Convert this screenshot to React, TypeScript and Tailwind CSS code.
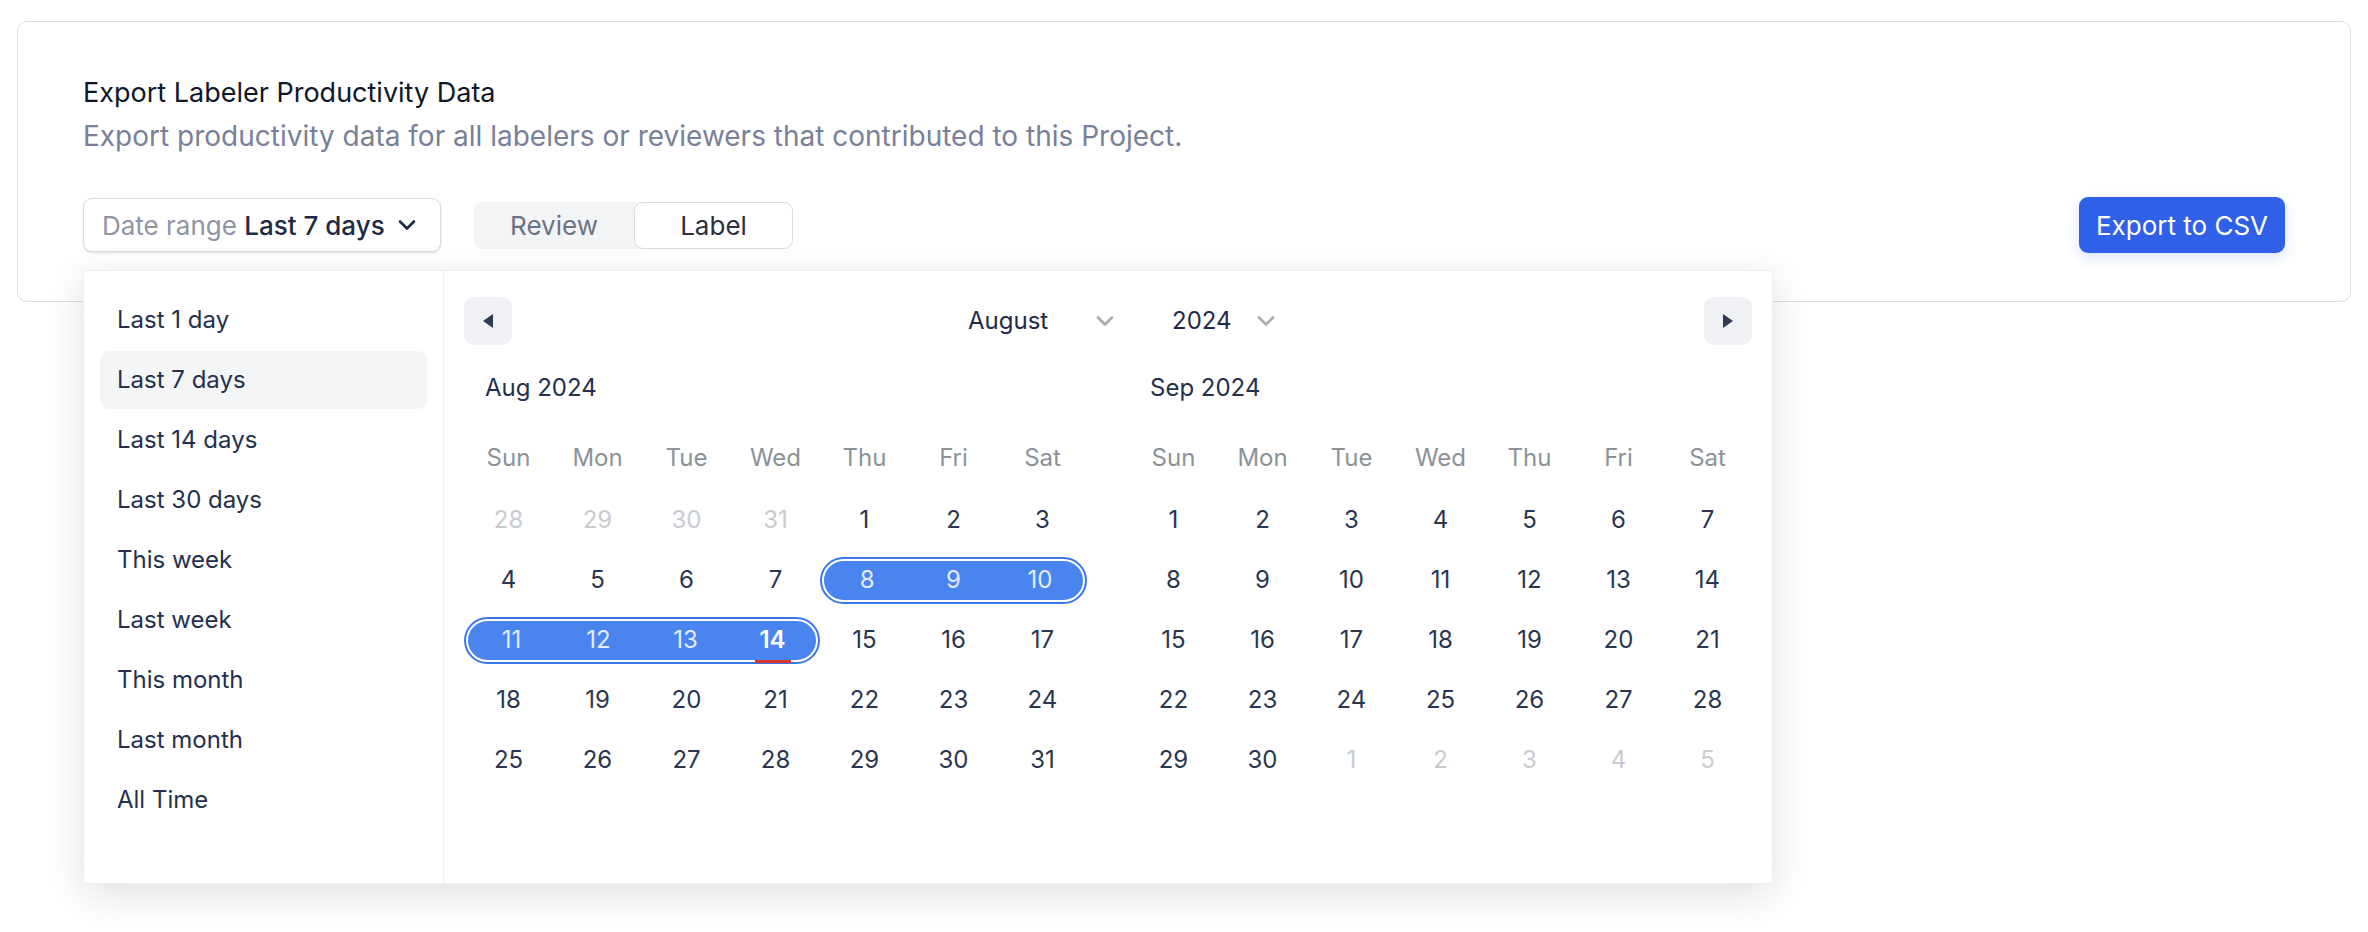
import React from "react";

type Day = { d: number; muted?: boolean };
type Week = { days: Day[]; pill?: [number, number]; today?: number };

const presets = [
  "Last 1 day",
  "Last 7 days",
  "Last 14 days",
  "Last 30 days",
  "This week",
  "Last week",
  "This month",
  "Last month",
  "All Time",
];

const weekdays = ["Sun", "Mon", "Tue", "Wed", "Thu", "Fri", "Sat"];

const range = (a: number, b: number, muted = false): Day[] => {
  const out: Day[] = [];
  for (let i = a; i <= b; i++) out.push({ d: i, muted });
  return out;
};

const august: Week[] = [
  { days: [...range(28, 31, true), ...range(1, 3)] },
  { days: range(4, 10), pill: [4, 6] },
  { days: range(11, 17), pill: [0, 3], today: 3 },
  { days: range(18, 24) },
  { days: range(25, 31) },
];

const september: Week[] = [
  { days: range(1, 7) },
  { days: range(8, 14) },
  { days: range(15, 21) },
  { days: range(22, 28) },
  { days: [...range(29, 30), ...range(1, 5, true)] },
];

// span + inner columns, written out so tailwind picks them up
const spanClass: Record<number, [string, string]> = {
  3: ["col-span-3", "grid-cols-3"],
  4: ["col-span-4", "grid-cols-4"],
};

function Chevron({ className }: { className?: string }) {
  return (
    <svg width="18" height="12" viewBox="0 0 18 12" fill="none" className={className}>
      <path d="M2 2.5l7 7 7-7" stroke="currentColor" strokeWidth="2.6" strokeLinecap="round" strokeLinejoin="round" />
    </svg>
  );
}

function DayCell({ day }: { day: Day }) {
  return (
    <div className={"h-[60px] flex items-center justify-center " + (day.muted ? "text-[#c8ccd2]" : "text-[#2a3550]")}>
      {day.d}
    </div>
  );
}

function WeekRow({ week }: { week: Week }) {
  if (!week.pill) {
    return (
      <div className="grid grid-cols-[repeat(7,89px)]">
        {week.days.map((day, i) => (
          <DayCell key={i} day={day} />
        ))}
      </div>
    );
  }
  const [s, e] = week.pill;
  const before = week.days.slice(0, s);
  const inside = week.days.slice(s, e + 1);
  const after = week.days.slice(e + 1);
  const [span, cols] = spanClass[inside.length];
  return (
    <div className="grid grid-cols-[repeat(7,89px)]">
      {before.map((day, i) => (
        <DayCell key={"b" + i} day={day} />
      ))}
      <div className={"h-[60px] flex items-center " + span}>
        <div
          className={
            "mx-[2px] w-full h-[43px] rounded-full border-2 border-white bg-[#4a84ee] ring-2 ring-[#3a75ea] grid " + cols
          }
        >
          {inside.map((day, i) => {
            const isToday = week.today === s + i;
            return (
              <div
                key={i}
                className={
                  "relative flex items-center justify-center " +
                  (isToday ? "text-white font-semibold" : "text-[#e4ecfc]")
                }
              >
                {day.d}
                {isToday && (
                  <span className="absolute left-1/2 -translate-x-1/2 bottom-[-3px] w-[36px] h-[3px] bg-[#d9342b]" />
                )}
              </div>
            );
          })}
        </div>
      </div>
      {after.map((day, i) => (
        <DayCell key={"a" + i} day={day} />
      ))}
    </div>
  );
}

function Month({ title, weeks }: { title: string; weeks: Week[] }) {
  return (
    <div className="w-[623px]">
      <div className="h-[36px] pl-[21px] flex items-center text-[#24304d]">{title}</div>
      <div className="mt-[28px] h-[48px] grid grid-cols-[repeat(7,89px)] text-[#8b9399]">
        {weekdays.map((w) => (
          <div key={w} className="flex items-center justify-center">
            {w}
          </div>
        ))}
      </div>
      <div className="mt-[8px] h-[360px]">
        {weeks.map((wk, i) => (
          <WeekRow key={i} week={wk} />
        ))}
      </div>
    </div>
  );
}

function Triangle({ dir }: { dir: "left" | "right" }) {
  return (
    <svg width="12" height="16" viewBox="0 0 12 16">
      {dir === "left" ? (
        <path d="M11 1v14L1 8z" fill="#2e3b52" />
      ) : (
        <path d="M1 1v14l10-7z" fill="#2e3b52" />
      )}
    </svg>
  );
}

function DatePopover() {
  return (
    <div className="absolute left-0 top-[72px] z-10 flex bg-white border border-[#eceef1] text-[24px] shadow-[0_10px_36px_rgba(17,24,39,0.13)]">
      <div className="w-[360px] border-r border-[#eceef2] pt-[20px] px-[16px] flex flex-col gap-[2px]">
        {presets.map((p) => (
          <div
            key={p}
            className={
              "h-[58px] pl-[17px] flex items-center rounded-[9px] text-[#24304d] " +
              (p === "Last 7 days" ? "bg-[#f4f5f7]" : "")
            }
          >
            {p}
          </div>
        ))}
      </div>
      <div className="px-[20px] pt-[26px] pb-[33px]">
        <div className="h-[48px] flex items-center">
          <div className="w-[48px] h-[48px] rounded-[10px] bg-[#f0f1f5] flex items-center justify-center">
            <Triangle dir="left" />
          </div>
          <div className="flex-1 flex justify-center">
            <div className="ml-[21px] flex gap-[32px] text-[#1f2a48]">
              <div className="w-[172px] pl-[16px] pr-[10px] flex items-center justify-between">
                <span>August</span>
                <Chevron className="text-[#a7acb3]" />
              </div>
              <div className="w-[129px] pl-[16px] pr-[10px] flex items-center justify-between">
                <span>2024</span>
                <Chevron className="text-[#a7acb3]" />
              </div>
            </div>
          </div>
          <div className="w-[48px] h-[48px] rounded-[10px] bg-[#f0f1f5] flex items-center justify-center">
            <Triangle dir="right" />
          </div>
        </div>
        <div className="mt-[25px] flex gap-[42px]">
          <Month title="Aug 2024" weeks={august} />
          <Month title="Sep 2024" weeks={september} />
        </div>
      </div>
    </div>
  );
}

export default function App() {
  return (
    <div className="min-h-screen bg-white pt-[21px] px-[17px] text-[26px] font-['Inter',sans-serif]">
      <div className="rounded-[10px] border border-[#dcdde2] bg-white pt-[53px] pb-[48px] px-[65px]">
        <h2 className="text-[27px] leading-[36px] text-[#0f172a]">Export Labeler Productivity Data</h2>
        <p className="mt-[5px] text-[28px] leading-[40px] text-[#788197]">
          Export productivity data for all labelers or reviewers that contributed to this Project.
        </p>
        <div className="mt-[41px] flex items-center justify-between">
          <div className="flex items-center gap-[33px]">
            <div className="relative">
              <button className="w-[358px] h-[54px] pl-[18px] pr-[24px] flex items-center justify-between rounded-[9px] border border-[#d9dbe0] bg-white shadow-sm">
                <span>
                  <span className="text-[#8f95a3]">Date range </span>
                  <span className="font-medium text-[#1f2a44]">Last 7 days</span>
                </span>
                <Chevron className="text-[#1f2a44]" />
              </button>
              <DatePopover />
            </div>
            <div className="h-[47px] flex rounded-[9px] bg-[#f3f4f6]">
              <div className="w-[160px] flex items-center justify-center text-[#6b7386]">Review</div>
              <div className="w-[159px] flex items-center justify-center rounded-[9px] border border-[#d8dadf] bg-white text-[#2a313c]">
                Label
              </div>
            </div>
          </div>
          <button className="w-[206px] h-[56px] rounded-[9px] bg-[#2f60e7] text-white shadow-[0_4px_14px_rgba(47,96,231,0.18)]">
            Export to CSV
          </button>
        </div>
      </div>
    </div>
  );
}
